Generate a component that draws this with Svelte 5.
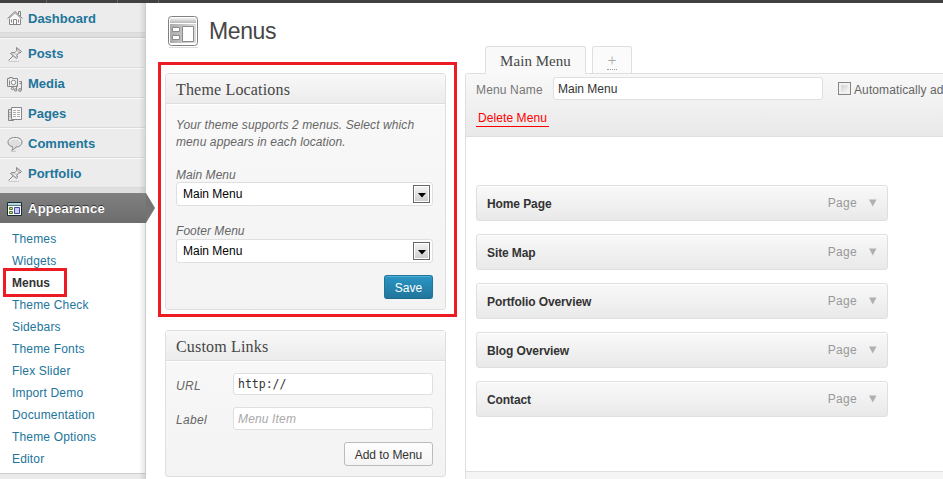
<script>
  const items = [
    { name: 'Posts', icon: 'pin' },
    { name: 'Media', icon: 'media' },
    { name: 'Pages', icon: 'pages' },
    { name: 'Comments', icon: 'comments' },
    { name: 'Portfolio', icon: 'pin' }
  ];
  const submenu = ['Themes', 'Widgets', 'Menus', 'Theme Check', 'Sidebars', 'Theme Fonts', 'Flex Slider', 'Import Demo', 'Documentation', 'Theme Options', 'Editor'];
  const menuItems = ['Home Page', 'Site Map', 'Portfolio Overview', 'Blog Overview', 'Contact'];
</script>

{#snippet icon(kind)}
  <svg class="icon" width="16" height="16" viewBox="0 0 16 16" fill="none" stroke="#868686">
    {#if kind === 'home'}
      <path d="M2.5 8v6.5h11V8L8 2.8z" fill="#f8f8f8" />
      <path d="M.5 8.5 8 1.5l7.5 7M11.5 4.5v-3h2v5M6.5 14V9.5h3V14M4.5 9.5v3M11.5 9.5v3" />
      <path d="M2 8.7 8 3.2l6 5.5" stroke="#bbb" />
    {:else if kind === 'pin'}
      <path d="M9.500 1.500 14.500 5.500 13 7 11.500 6.800 9.800 9.500 10.500 11.500 9.500 12.500 3.500 7.500 4.800 6.500 7 6.800 9.700 4.500z" fill="#d4d4d4" />
      <path d="m8.500 5.500 2.500 2M6.500 8l2.500 2" stroke="#fff" />
      <path d="M6 10 1.5 14.500" />
      <path d="M2 15.5h10" stroke="#ccc" />
    {:else if kind === 'media'}
      <path d="M.5 2.500h2v-1h3v1h5v8H.5z" fill="#eee" />
      <circle cx="6.5" cy="6.500" r="2.200" fill="#fff" />
      <path d="M2.500 4.500v5M9.500 13.500v-4M14.500 13.500v-8h-2M12.500 5.500h2v2h-2" />
      <circle cx="5.500" cy="12.500" r="1.200" fill="#ddd" />
      <circle cx="8.700" cy="14" r="1.200" fill="#ddd" />
      <circle cx="13" cy="14" r="1.400" fill="#ddd" />
    {:else if kind === 'pages'}
      <path d="M1.500 3.5h5v11h-5z" fill="#ddd" />
      <path d="M4.5 1.5h10v12h-10z" fill="#fafafa" />
      <path d="M6 4.5h3M10 4.5h3M6 6.5h3M10 6.5h3M6 8.5h3M10 8.5h3M6 10.5h3M10 10.5h3M2 6.5h2M2 8.5h2M2 10.5h2" stroke="#b0b0b0" />
    {:else if kind === 'comments'}
      <path d="M8 1.500c4.500 0 7 1.900 7 4.700s-2.500 4.800-6 4.800c-1 1.600-2.300 3-4.200 3.300.8-1 1-2.200.9-3.500C2.900 10.200 1 8.600 1 6.200c0-2.800 2.700-4.700 7-4.700z" fill="#dedede" />
      <path d="M2.500 6c.2-2 2.200-3.200 5.500-3.200s5.300 1.200 5.500 3.200" stroke="#fff" />
      <path d="M4 15.500h5" stroke="#ccc" />
    {:else}
      <path d="M.5 1.500h14v13H.5z" fill="#fff" stroke="#173033" />
      <path d="M1 2h13v3H1z" fill="#b9d5df" stroke="none" />
      <path d="M1 4.500h13" stroke="#5d7780" />
      <path d="M2.500 6.500h3v2h-3zM2.500 10.500h3v2h-3z" fill="#bfe38c" stroke="#4d7a2c" />
      <path d="M7.500 6.500h5v6h-5z" fill="#c9c9f5" stroke="#4444a5" />
    {/if}
  </svg>
{/snippet}

<div class="screen">
  <div class="adminbar"><i></i><i></i><i></i></div>
  <div class="body">
    <nav>
      <a class="row first">{@render icon('home')}<span>Dashboard</span></a>
      <div class="sep"></div>
      {#each items as item}
        <a class="row">{@render icon(item.icon)}<span>{item.name}</span></a>
      {/each}
      <div class="sep low"></div>
      <a class="row current">
        {@render icon('appearance')}<span>Appearance</span>
        <svg class="arrow" width="10" height="30" viewBox="0 0 10 30"><path d="M0 0 9 15 0 30z" fill="#747474" /></svg>
      </a>
      <div class="sub">
        {#each submenu as entry}
          <a class:here={entry === 'Menus'}>{entry}</a>
        {/each}
        <div class="mark small"></div>
      </div>
      <div class="tail"></div>
    </nav>

    <section class="left">
      <header>
        <svg width="32" height="32" viewBox="0 0 32 32">
          <defs>
            <linearGradient id="top" x2="0" y2="1"><stop stop-color="#f4f4f4" /><stop offset="1" stop-color="#b5b5b5" /></linearGradient>
            <linearGradient id="base" x2="1" y2="0"><stop stop-color="#aaa" /><stop offset="1" stop-color="#ddd" /></linearGradient>
          </defs>
          <path d="M1 31.500h29" stroke="#ddd" />
          <rect x=".5" y=".5" width="29" height="29" rx="3" fill="#fff" stroke="#808080" />
          <rect x="2" y="2" width="26" height="5" fill="url(#top)" />
          <rect x="2" y="8" width="26" height="19" fill="url(#base)" />
          <path d="M4.500 11.500h7v4h-7zM4.500 19.500h7v4h-7zM14.500 10.500h11v15h-11z" fill="#fff" stroke="#8c8c8c" />
        </svg>
        <h1>Menus</h1>
      </header>

      <div class="card locations">
        <h3>Theme Locations</h3>
        <p>Your theme supports 2 menus. Select which<br />menu appears in each location.</p>
        <label class="l1">Main Menu</label>
        <div class="select"><span>Main Menu</span><b><svg width="9" height="5"><path d="M0 0h8L4 4.500z" fill="#000" /></svg></b></div>
        <label class="l2">Footer Menu</label>
        <div class="select"><span>Main Menu</span><b><svg width="9" height="5"><path d="M0 0h8L4 4.500z" fill="#000" /></svg></b></div>
        <button class="save">Save</button>
      </div>

      <div class="card links">
        <h3>Custom Links</h3>
        <div class="field f1"><em>URL</em><div class="input mono">http://</div></div>
        <div class="field f2"><em>Label</em><div class="input hint">Menu Item</div></div>
        <button class="add">Add to Menu</button>
      </div>
      <div class="mark big"></div>
    </section>

    <section class="right">
      <div class="tabs">
        <div class="tab active">Main Menu</div>
        <div class="tab plus"><span>+</span></div>
      </div>
      <div class="panel">
        <div class="panelhead">
          <div class="line">
            <span class="name">Menu Name</span>
            <div class="input wide">Main Menu</div>
            <i class="check"></i>
            <span class="auto">Automatically ad</span>
          </div>
          <a class="delete">Delete Menu</a>
        </div>
        <div class="list">
          {#each menuItems as m}
            <div class="item"><strong>{m}</strong><span>Page</span><svg width="8" height="8"><path d="M0 .5h7.500L3.750 7.500z" fill="#b0b0b0" /></svg></div>
          {/each}
        </div>
        <div class="foot"></div>
      </div>
    </section>
  </div>
</div>

<style>
  * { box-sizing: border-box; }
  .screen { width: 943px; height: 479px; overflow: hidden; background: #fff; font: 12px/18px "Liberation Sans", Arial, sans-serif; color: #333; }
  .adminbar { height: 3px; background: #414141; display: flex; }
  .adminbar i { width: 71px; border-right: 1px solid #666; }
  .adminbar i:first-child { width: 47px; }
  .adminbar i:last-child { width: 41px; }
  .body { display: flex; height: 476px; }
  nav { position: relative; width: 146px; flex: none; background: #ececec; border-right: 1px solid #ccc; }
  nav::after { content: ""; position: absolute; top: 0; right: 0; bottom: 0; width: 6px; background: linear-gradient(90deg, transparent, rgba(0, 0, 0, .09)); }
  .row { display: flex; align-items: center; height: 30px; padding: 1px 0 0 7px; border-top: 1px solid #f9f9f9; border-bottom: 1px solid #dadada; color: #21759b; font-size: 13px; font-weight: bold; }
  .row span { padding: 1px 0 0 5px; }
  .row.first { border-top: 0; }
  .icon { flex: none; }
  .sep { height: 5px; background: #dfdfdf; border-bottom: 1px solid #ccc; }
  .low { border-bottom: 0; }
  .current { position: relative; z-index: 2; width: 146px; border: 0; color: #fff; background: linear-gradient(#808080, #6d6d6d); text-shadow: 0 -1px 0 #333; }
  .current span { letter-spacing: .25px; }
  .arrow { position: absolute; left: 146px; top: 0; }
  .sub { position: relative; height: 250px; padding-top: 5px; background: #fff; }
  .sub a { display: block; height: 22px; line-height: 22px; padding-left: 12px; color: #21759b; letter-spacing: .17px; }
  .sub .here { font-weight: bold; color: #333; letter-spacing: 0; }
  .tail { height: 10px; border-top: 1px solid #ccc; background: #eaeaea; }
  .mark { position: absolute; border: 3px solid #ed1c24; z-index: 4; }
  .small { left: 3px; top: 45px; width: 64px; height: 29px; }
  .left { position: relative; width: 300px; margin-left: 19px; flex: none; }
  .big { left: -7px; top: 59px; width: 299px; height: 255px; }
  header { display: flex; height: 70px; padding: 13px 0 0 3px; }
  h1 { margin: 2px 0 0 9px; font-size: 23px; line-height: 26px; font-weight: normal; color: #464646; letter-spacing: -.4px; }
  .card { display: flex; flex-direction: column; width: 281px; border: 1px solid #dfdfdf; border-radius: 3px; background: linear-gradient(#f9f9f9, #f3f3f3); }
  h3 { margin: 0; height: 30px; padding-left: 10px; font: 16px/32px "Liberation Serif", Georgia, serif; letter-spacing: .17px; color: #464646; background: linear-gradient(#f8f8f8, #ececec); border-bottom: 1px solid #dfdfdf; box-shadow: 0 1px #fff; }
  .locations { height: 237px; margin-bottom: 20px; }
  .links { height: 147px; }
  p { margin: 13px 10px 0; line-height: 17px; font-style: italic; color: #666; letter-spacing: .1px; white-space: nowrap; }
  label, em { font-style: italic; color: #666; letter-spacing: .05px; }
  label { margin-left: 10px; height: 18px; }
  .l1 { margin-top: 15px; margin-bottom: -2px; }
  .l2 { margin-top: 16px; margin-bottom: -1px; }
  .select { display: flex; justify-content: space-between; align-items: center; width: 257px; height: 24px; margin-left: 10px; padding: 0 2px 0 6px; border: 1px solid #dfdfdf; border-radius: 3px; background: #fff; color: #000; letter-spacing: 0; }
  .select b { display: flex; align-items: center; justify-content: center; width: 17px; height: 18px; border: 1px solid #666; background: linear-gradient(#f5f5f5, #ccc); box-shadow: inset 0 0 0 1px #fff; }
  .select svg { margin: 2px 0 0 1px; }
  button { font: 12px "Liberation Sans", Arial, sans-serif; padding: 1px 0 0; height: 24px; align-self: flex-end; margin-right: 12px; border-radius: 3px; }
  .save { width: 49px; margin-top: 12px; color: #fff; border: 1px solid #21759b; border-bottom-color: #1e6a8d; background: linear-gradient(#2a95c5, #21759b); box-shadow: inset 0 1px rgba(120, 200, 230, .5); }
  .add { width: 89px; margin-top: 12px; color: #333; border: 1px solid #bbb; background: linear-gradient(#fefefe, #f4f4f4); letter-spacing: -.05px; }
  .field { display: flex; margin-left: 10px; }
  .f1 { margin-top: 12px; height: 22px; }
  .f2 { margin-top: 12px; height: 23px; }
  em { width: 57px; padding-top: 4px; letter-spacing: .3px; }
  .input { width: 200px; height: 100%; padding-left: 4px; line-height: 22px; border: 1px solid #dfdfdf; border-radius: 3px; background: #fff; color: #333; }
  .mono { font-family: "DejaVu Sans Mono", monospace; font-size: 11.500px; line-height: 20px; }
  .hint { color: #aaa; font-style: italic; letter-spacing: .15px; }
  .right { flex: 1; min-width: 0; padding-top: 43px; }
  .tabs { display: flex; gap: 6px; padding-left: 20px; height: 27px; }
  .tab { height: 27px; border: 1px solid #dfdfdf; border-bottom: 0; border-radius: 3px 3px 0 0; background: #fbfbfb; color: #aaa; text-align: center; }
  .active { position: relative; z-index: 1; width: 101px; height: 28px; background: #f9f9f9; color: #464646; font: 15px/28px "Liberation Serif", Georgia, serif; letter-spacing: .05px; }
  .plus { width: 40px; font: 16px/27px "Liberation Serif", serif; }
  .plus span { display: inline-block; line-height: 17px; border-bottom: 1px dotted #999; }
  .panel { width: 600px; height: 500px; border: 1px solid #dfdfdf; border-right: 0; border-radius: 3px 0 0; }
  .panelhead { height: 63px; padding: 3px 0 0 10px; background: linear-gradient(#f8f8f8, #e9e9e9); border-bottom: 1px solid #dfdfdf; }
  .line { display: flex; height: 23px; white-space: nowrap; }
  .name { width: 77px; padding-top: 4px; color: #777; letter-spacing: .15px; }
  .wide { width: 270px; letter-spacing: 0; }
  .check { width: 13px; height: 13px; margin: 5px 3px 0 15px; border: 1px solid #858585; background: linear-gradient(135deg, #c5c8d0, #fff); box-shadow: inset 0 0 0 2px #f1f1f1; }
  .auto { padding-top: 4px; color: #666; letter-spacing: .1px; }
  .delete { display: block; width: 73px; height: 18px; margin-top: 9px; padding-left: 2px; line-height: 19px; color: #f00; border-bottom: 1px solid #f00; letter-spacing: .08px; white-space: nowrap; }
  .list { display: flex; flex-direction: column; gap: 13px; padding: 48px 0 0 10px; height: 334px; }
  .item { display: flex; align-items: center; width: 412px; height: 36px; padding: 0 10px; border: 1px solid #dfdfdf; border-radius: 3px; background: linear-gradient(#f9f9f9, #e9e9e9); box-shadow: inset 0 1px #fff; }
  .item strong { margin-right: auto; padding-top: 2px; letter-spacing: -.1px; }
  .item span { margin-right: 12px; color: #999; letter-spacing: .3px; }
  .foot { height: 20px; border-top: 1px solid #dfdfdf; background: #f5f5f5; }
</style>
